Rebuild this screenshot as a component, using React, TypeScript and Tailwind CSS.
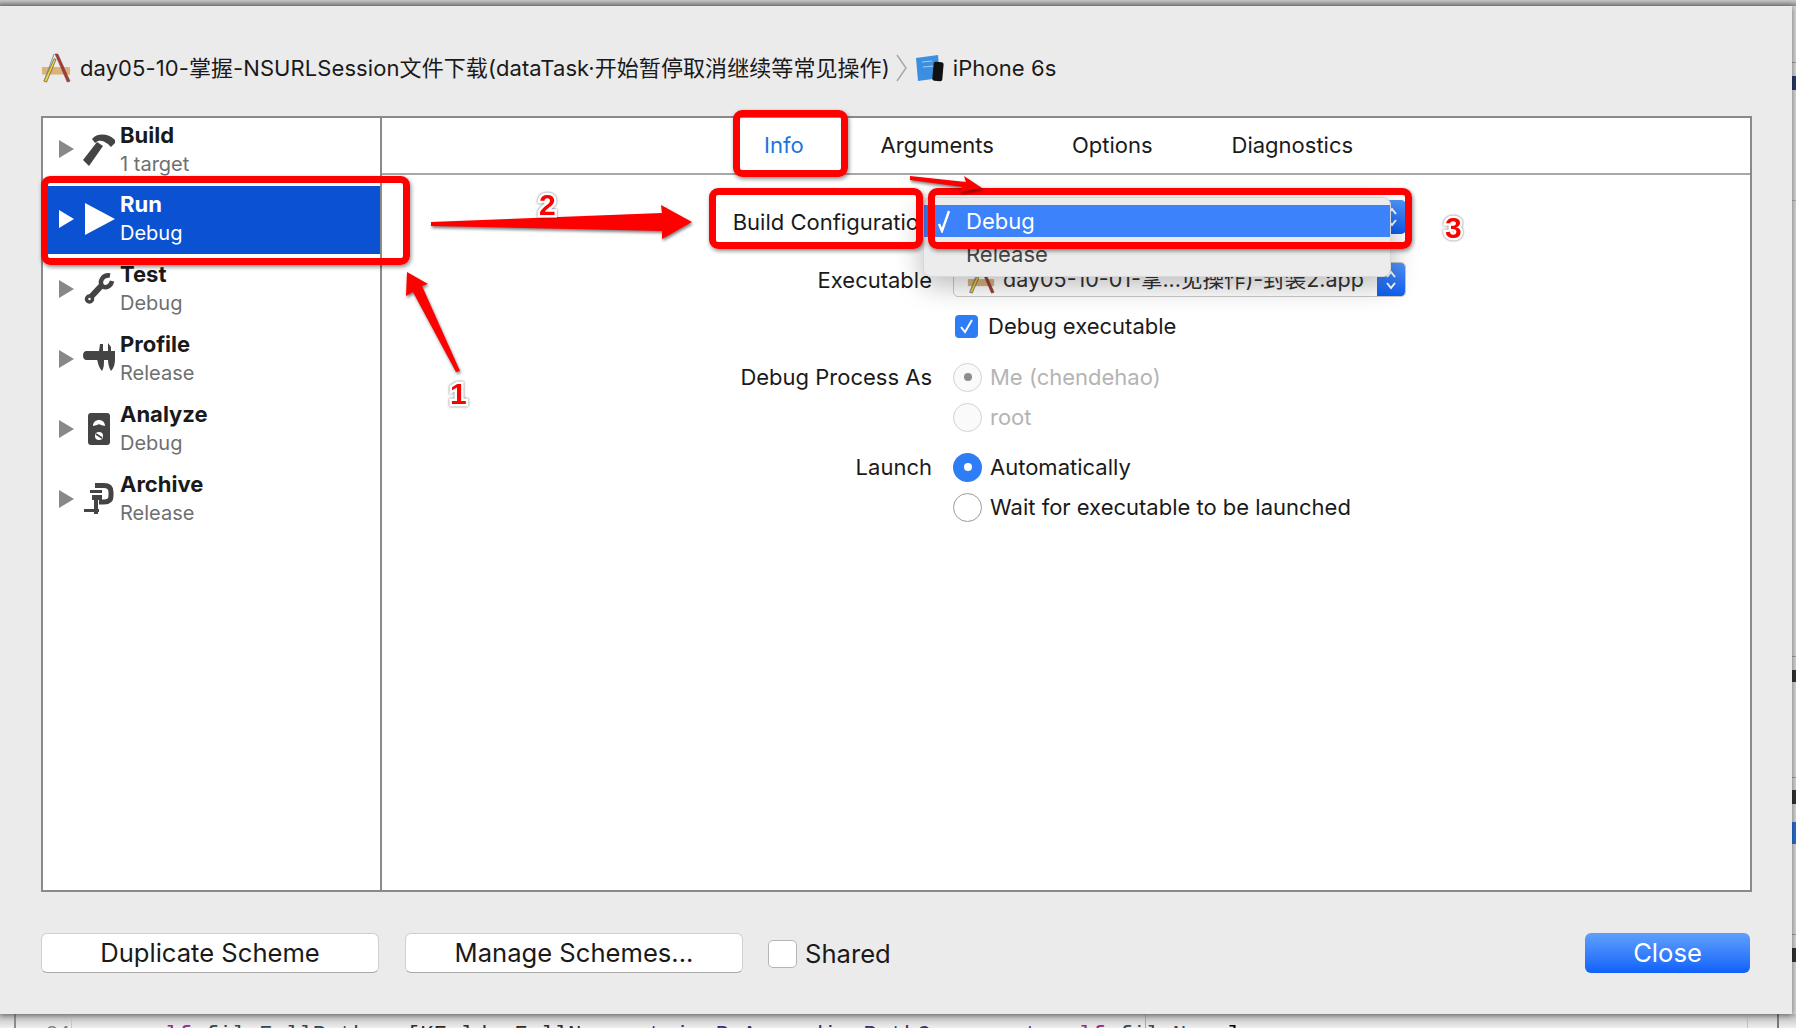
import type { ReactNode } from 'react';

const tri = <svg width="15" height="18" viewBox="0 0 15 18" className="shrink-0"><path d="M0 0 L15 9 L0 18 Z" fill="currentColor" /></svg>;

const icons: Record<string, ReactNode> = {
  hammer: (
    <svg width="32" height="33" viewBox="0 0 32 33" fill="#444">
      <path d="M0 27 L6 33 L20 13 L14 9 Z" />
      <path d="M9 6 C14 0 25 0 32 7 L32 10 L28 14 L25 11 C21 8 18 7 15 8 L12 10 Z" />
    </svg>
  ),
  play: <svg width="32" height="33" viewBox="0 0 32 33" fill="#fff"><path d="M2 0 L32 16 L2 32 Z" /></svg>,
  wrench: (
    <svg width="32" height="33" viewBox="0 0 32 33" fill="none" stroke="#444">
      <path d="M6 26 L20 11" strokeWidth="6" />
      <path d="M27 2.5 C20 1.5 16 8 19 13 C23 16 28 13 29 8" strokeWidth="4.5" />
      <circle cx="6.5" cy="26" r="3" strokeWidth="3.5" fill="#fff" />
    </svg>
  ),
  caliper: (
    <svg width="32" height="33" viewBox="0 0 32 33" fill="#444">
      <path d="M3 8 L32 8 L32 17 L3 17 C-1 17 -1 8 3 8 Z" />
      <path d="M17 1 L20 1 L20 8 L16 8 Z M25 0 L28 4 L28 8 L25 8 Z" />
      <path d="M14 16 L21 16 C21 21 21 25 19 28 C16 25 15 21 14 16 Z M25 16 L32 16 C32 21 31 25 28 28 C26 25 25 21 25 16 Z" />
    </svg>
  ),
  gauge: (
    <svg width="32" height="33" viewBox="0 0 32 33">
      <rect x="5" y="0" width="22" height="32" rx="3" fill="#444" />
      <path d="M10 13 C10 5 22 5 22 13 L18 12 C17 11 15 11 14 12 Z" fill="#fff" />
      <circle cx="16" cy="23" r="4" fill="#fff" />
      <path d="M13 21 L19 25" stroke="#444" strokeWidth="1.6" />
    </svg>
  ),
  clamp: (
    <svg width="32" height="33" viewBox="0 0 32 33">
      <path d="M12 2.5 L21 2.5 C26 2.5 28 5 28 9 L28 13 C28 17 26 19 21 19 L16 19" fill="none" stroke="#444" strokeWidth="5" />
      <path d="M7 7 L19 7 L19 10 L7 10 Z M9 12 L19 12 L19 17 L9 17 Z M11 16 L15 16 L15 31 L11 31 Z M1 26 L16 26 L16 29 L1 29 Z" fill="#444" />
    </svg>
  ),
};

function AppIcon({ size }: { size: number }) {
  return (
    <svg width={size} height={size} viewBox="0 0 32 32" className="shrink-0">
      <rect x="1" y="15" width="30" height="8" fill="#d9b27c" />
      <path d="M3 30 L14 6 L16 7 L6 31 Z" fill="#f2d33a" stroke="#333" strokeWidth="0.6" />
      <path d="M15 1 L18 1 L31 30 L28 31 Z" fill="#b5342a" stroke="#555" strokeWidth="0.6" />
      <path d="M14 1 L4 28" stroke="#888" strokeWidth="1" />
    </svg>
  );
}

function Stepper({ className }: { className: string }) {
  return (
    <div className={`flex flex-col items-center justify-center rounded-r-[5px] bg-gradient-to-b from-[#4f94fb] to-[#0d5df0] ${className}`}>
      <svg width="12" height="24" viewBox="0 0 12 24" fill="none" stroke="#fff" strokeWidth="2">
        <path d="M2 9 L6 4 L10 9 M2 15 L6 20 L10 15" />
      </svg>
    </div>
  );
}

function SchemeRow({ name, sub, icon, active, first }: { name: string; sub: string; icon: string; active?: boolean; first?: boolean }) {
  return (
    <div className="h-[70px] py-px">
      <div className={`h-[68px] flex items-center pl-[16px] pb-[2px] ${active ? 'bg-[#0b52d2] text-white' : 'text-[#888]'}`}>
        {tri}
        <div className="w-[32px] ml-[9px] shrink-0">{icons[icon]}</div>
        <div className={`ml-[5px] ${first ? '' : '-mt-[3px]'}`}>
          <div className={`text-[22px] font-bold leading-[30px] ${active ? 'text-white' : 'text-[#1a1a1a]'}`}>{name}</div>
          <div className={`text-[20px] leading-[28px] ${active ? 'text-white' : 'text-[#6f6f6f]'}`}>{sub}</div>
        </div>
      </div>
    </div>
  );
}

function Radio({ on, dim, label }: { on?: boolean; dim?: boolean; label: string }) {
  return (
    <div className="flex items-center h-[40px]">
      <div className={`w-[29px] h-[29px] rounded-full flex items-center justify-center shrink-0 ${on && !dim ? 'bg-[#2f7df6]' : dim ? 'border border-[#d2d2d2] bg-[#fafafa]' : 'border border-[#9a9a9a] bg-white'}`}>
        {on && <div className={`w-[8px] h-[8px] rounded-full ${dim ? 'bg-[#8d8d8d]' : 'bg-white'}`} />}
      </div>
      <span className={`ml-[8px] text-[22px] ${dim ? 'text-[#b4b4b4]' : 'text-[#1a1a1a]'}`}>{label}</span>
    </div>
  );
}

function FormRow({ label, className, children }: { label?: string; className?: string; children: ReactNode }) {
  return (
    <div className={`flex ${className ?? ''}`}>
      <div className="w-[550px] shrink-0 h-[40px] leading-[40px] text-right text-[22px] text-[#1a1a1a] whitespace-nowrap">{label}</div>
      <div className="ml-[21px] flex-1">{children}</div>
    </div>
  );
}

function RedBox({ className }: { className: string }) {
  return <div className={`absolute z-20 border-[7px] border-[#fe0000] rounded-[9px] shadow-[1px_2px_4px_rgba(0,0,0,0.45)] ${className}`} />;
}

function Num({ n, className }: { n: string; className: string }) {
  return <span className={`absolute z-30 text-[30px] font-bold font-['Liberation_Sans',sans-serif] leading-none text-[#fe0000] [-webkit-text-stroke:5px_white] [paint-order:stroke_fill] [filter:drop-shadow(0_0_1px_rgba(0,0,0,0.6))] ${className}`}>{n}</span>;
}

// slivers of the editor window that show past the sheet's right edge
const edgeBits = [
  { top: 62, h: 1, bg: '#a0a0a0' },
  { top: 76, h: 14, bg: '#2a3a6a' },
  { top: 200, h: 1, bg: '#b0b0b0' },
  { top: 656, h: 1, bg: '#a0a0a0' },
  { top: 670, h: 12, bg: '#333333' },
  { top: 777, h: 1, bg: '#a0a0a0' },
  { top: 790, h: 14, bg: '#333333' },
  { top: 822, h: 22, bg: '#2a6fd0' },
  { top: 934, h: 1, bg: '#a0a0a0' },
  { top: 948, h: 14, bg: '#333333' },
];

export default function App() {
  return (
    <div className="relative w-[1796px] h-[1028px] overflow-hidden bg-[#d6d6d6] font-['Inter','Noto_Sans_CJK_SC',sans-serif]">
      <div className="h-[6px] bg-gradient-to-b from-[#c8c8c8] to-[#8c8c8c]" />
      {edgeBits.map((b) => (
        <div key={b.top} className="absolute right-0 w-[4px]" style={{ top: b.top, height: b.h, background: b.bg }} />
      ))}
      <div className="w-[1792px] h-[1008px] bg-[#ebebeb] shadow-[0_1px_6px_rgba(0,0,0,0.5)] pl-[41px] pr-[40px] flex flex-col relative z-10">
        <div className="h-[110px] pt-[14px] flex items-center text-[22px] tracking-[0.08px] text-[#1a1a1a] whitespace-nowrap">
          <AppIcon size={30} />
          <span className="ml-[9px]">day05-10-掌握-NSURLSession文件下载(dataTask·开始暂停取消继续等常见操作)</span>
          <svg width="11" height="28" viewBox="0 0 11 28" fill="none" stroke="#a8a8a8" strokeWidth="1.5" className="ml-[6px]"><path d="M1 1 L10 14 L1 27" /></svg>
          <svg width="30" height="28" viewBox="0 0 30 28" className="ml-[7px]">
            <path d="M2 4 L24 1 L26 24 L4 27 Z" fill="#3c8fe0" />
            <path d="M8 8 L18 7 M9 13 L20 12" stroke="#9fd0f5" strokeWidth="1" />
            <rect x="19" y="8" width="10" height="19" rx="2" fill="#111" transform="rotate(5 24 17)" />
          </svg>
          <span className="ml-[9px]">iPhone 6s</span>
        </div>
        <div className="h-[776px] border-2 border-[#8a8a8a] bg-white flex">
          <div className="w-[339px] border-r-2 border-[#8a8a8a] shrink-0">
            <div className="-mt-[3px]">
              <SchemeRow name="Build" sub="1 target" icon="hammer" first />
              <SchemeRow name="Run" sub="Debug" icon="play" active />
              <SchemeRow name="Test" sub="Debug" icon="wrench" />
              <SchemeRow name="Profile" sub="Release" icon="caliper" />
              <SchemeRow name="Analyze" sub="Debug" icon="gauge" />
              <SchemeRow name="Archive" sub="Release" icon="clamp" />
            </div>
          </div>
          <div className="flex-1 flex flex-col">
            <div className="h-[57px] border-b-2 border-[#a8a8a8] flex items-center pl-[382px] text-[22px] text-[#1a1a1a]">
              <span className="text-[#1b74e0]">Info</span>
              <span className="ml-[77px]">Arguments</span>
              <span className="ml-[78px]">Options</span>
              <span className="ml-[79px]">Diagnostics</span>
            </div>
            <div className="relative flex-1 pt-[27px]">
              <FormRow label="Build Configuration">
                <div className="relative w-[453px] h-[34px] -mt-[2px] flex justify-end">
                  <Stepper className="w-[28px] h-[34px]" />
                </div>
              </FormRow>
              <FormRow label="Executable" className="mt-[18px]">
                <div className="w-[453px] h-[35px] mt-[2px] rounded-[5px] border border-[#c8c8c8] bg-white flex items-center overflow-hidden">
                  <div className="ml-[13px]"><AppIcon size={28} /></div>
                  <span className="ml-[8px] flex-1 text-[21.5px] text-[#333] whitespace-nowrap">day05-10-01-掌...见操作)-封装2.app</span>
                  <Stepper className="w-[28px] h-[35px]" />
                </div>
              </FormRow>
              <FormRow className="mt-[6px]">
                <div className="flex items-center h-[40px] pl-[2px]">
                  <div className="w-[23px] h-[23px] rounded-[4px] bg-[#2f7df6] flex items-center justify-center">
                    <svg width="15" height="15" viewBox="0 0 15 15" fill="none" stroke="#fff" strokeWidth="2"><path d="M2 8 L6 13 L13 1" /></svg>
                  </div>
                  <span className="ml-[10px] text-[22px] text-[#1a1a1a]">Debug executable</span>
                </div>
              </FormRow>
              <FormRow label="Debug Process As" className="mt-[11px]"><Radio on dim label="Me (chendehao)" /></FormRow>
              <FormRow><Radio dim label="root" /></FormRow>
              <FormRow label="Launch" className="mt-[10px]"><Radio on label="Automatically" /></FormRow>
              <FormRow><Radio label="Wait for executable to be launched" /></FormRow>

              <div className="absolute left-[541px] top-[22px] w-[468px] h-[80px] rounded-[8px] bg-[#ececec] border border-[#d8d8d8] shadow-[0_8px_28px_rgba(0,0,0,0.28)] pt-[7px] text-[22px]">
                <div className="h-[32px] bg-[#3b82fb] text-white flex items-center relative">
                  <svg width="14" height="24" viewBox="0 0 14 24" fill="none" stroke="#fff" strokeWidth="2.4" className="absolute left-[13px]"><path d="M2 15 L5 22 L12 2" /></svg>
                  <span className="ml-[42px]">Debug</span>
                </div>
                <div className="h-[34px] flex items-center pl-[42px] text-[#444]">Release</div>
              </div>
            </div>
          </div>
        </div>
        <div className="mt-[41px] flex items-start text-[#1a1a1a]">
          <button className="w-[338px] h-[40px] bg-white rounded-[6px] border border-[#cfcfcf] border-b-[#a9a9a9] text-[25.6px]">Duplicate Scheme</button>
          <button className="ml-[26px] w-[338px] h-[40px] bg-white rounded-[6px] border border-[#cfcfcf] border-b-[#a9a9a9] text-[25.6px]">Manage Schemes...</button>
          <div className="ml-[25px] w-[29px] h-[28px] mt-[7px] bg-white rounded-[5px] border border-[#b5b5b5]" />
          <span className="ml-[8px] mt-[1px] text-[25.6px] leading-[40px]">Shared</span>
          <button className="ml-auto w-[165px] h-[40px] mr-[2px] rounded-[6px] bg-gradient-to-b from-[#5f9ffb] to-[#0d60fb] text-white text-[25.6px]">Close</button>
        </div>
      </div>
      <div className="absolute left-0 top-[1014px] w-full h-[14px] overflow-hidden bg-gradient-to-b from-[#bdbdbd] to-[#efefef]">
        <div className="absolute left-[14px] top-0 w-[2px] h-full bg-[#8c8c8c]" />
        <div className="absolute left-[71px] top-0 w-px h-full bg-[#c8c8c8]" />
        <div className="absolute left-[1145px] top-0 w-px h-full bg-[#a8a8a8]" />
        <div className="absolute left-[1747px] top-0 w-px h-full bg-[#c0c0c0]" />
        <div className="absolute left-[1777px] top-0 w-[2px] h-full bg-[#777]" />
        <div className="absolute left-[46px] top-[10px] text-[20px] leading-none font-['Liberation_Mono',monospace] text-[#777]">84</div>
        <div className="absolute left-[138px] top-[10px] whitespace-pre text-[22.4px] leading-none font-['Liberation_Mono',monospace] text-[#2e4a55]">
          <span className="text-[#9b2393]">self</span>.fileFullPath = <span className="text-[#3a2a1a]">[KFolderFullName</span> <span className="text-[#3e2a7a]">stringByAppendingPathComponent</span>:<span className="text-[#9b2393]">self</span>.fileName<span className="text-black">]</span>;
        </div>
      </div>

      <RedBox className="left-[41px] top-[176px] w-[369px] h-[89px]" />
      <RedBox className="left-[733px] top-[110px] w-[115px] h-[67px]" />
      <RedBox className="left-[709px] top-[188px] w-[214px] h-[61px]" />
      <RedBox className="left-[928px] top-[188px] w-[484px] h-[61px]" />
      <svg className="absolute left-0 top-0 z-20 pointer-events-none" width="1796" height="1028" viewBox="0 0 1796 1028" fill="#fe0000">
        <g style={{ filter: 'drop-shadow(1px 2px 1.5px rgba(0,0,0,0.5))' }}>
          <path d="M407 272 L428 284 L422 286 L460 371 L456 372 L413 292 L406 296 Z" />
          <path d="M431 222 L662 213 L661 205 L692 222 L662 239 L662 231 L431 226 Z" />
          <path d="M910 176 L966 182 L964 176 L982 188 L960 192 L962 187 L910 180 Z" />
        </g>
      </svg>
      <Num n="1" className="left-[450px] top-[379px]" />
      <Num n="2" className="left-[539px] top-[190px]" />
      <Num n="3" className="left-[1445px] top-[213px]" />
    </div>
  );
}
